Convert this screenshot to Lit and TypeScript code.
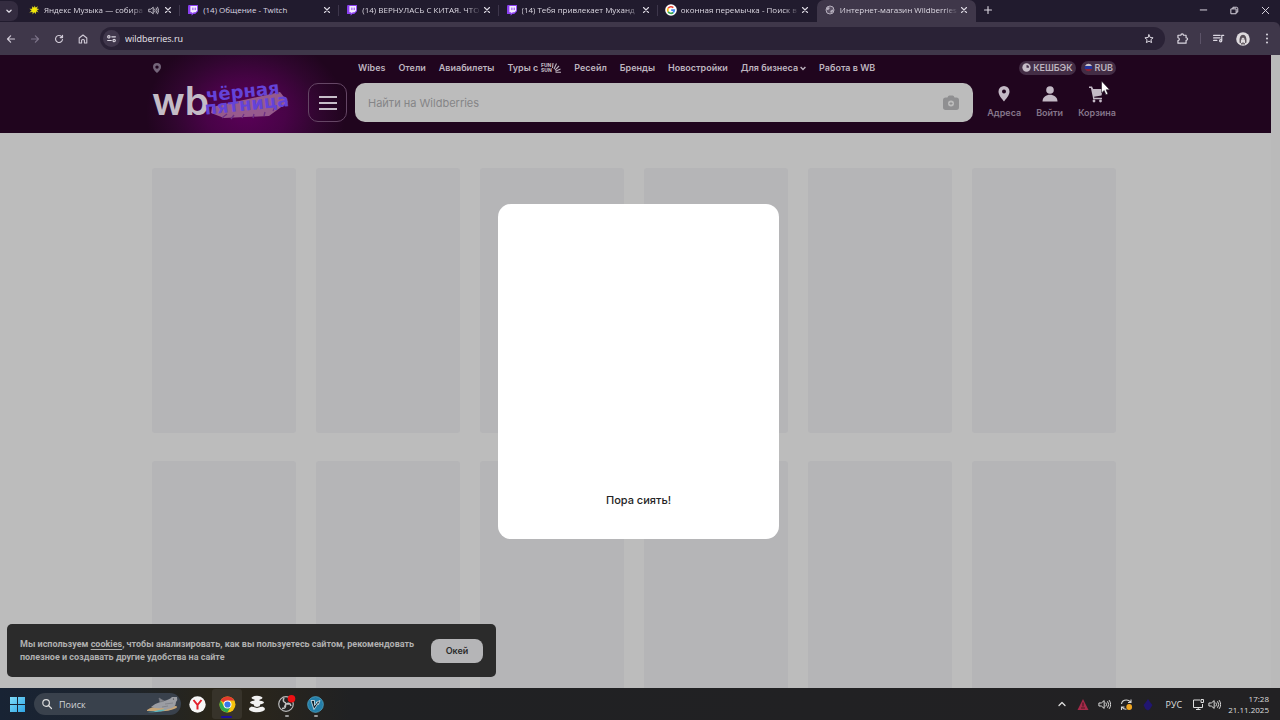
import { LitElement, html, css, svg, nothing, TemplateResult } from "lit";
import { customElement, state } from "lit/decorators.js";

const stroke = (d: string, size = 12, width = 1.2) => html`
  <svg class="icon" width=${size} height=${size} viewBox="0 0 12 12" fill="none" stroke="currentColor"
    stroke-width=${width} stroke-linecap="round" stroke-linejoin="round" aria-hidden="true"><path d=${d}></path></svg>`;

const twitch = html`
  <svg class="icon" width="12" height="12" viewBox="0 0 12 12" aria-hidden="true">
    <path d="M1.5 1H11v6.2L8.2 10H6.4L4.6 11.8V10H1V2.6z" fill="#8b3ff0"></path>
    <path d="M3.4 1.9h6.7v4.9L8.5 8.3H6.8L5.3 9.6V8.3H3.4z" fill="#f4ecff"></path>
    <path d="M5.9 3.6v2.5M8.2 3.6v2.5" stroke="#8b3ff0" stroke-width="1"></path>
  </svg>`;

const yandexMusic = html`
  <svg class="icon" width="12" height="12" viewBox="0 0 12 12" aria-hidden="true">
    <path d="M6.5 1.6l1.1 2 2.5-1.4-1.3 2.3 2.4.6-2.2 1.3 1.6 2.1-2.4-.9L7.9 10 6.2 8.3 4.6 10.6l-.1-2.7-3.2.6 2.2-1.9L1.4 4.8l2.9-.1-.4-2.4 2.2 1.4z" fill="#d9d21d"></path>
    <circle cx="6.2" cy="5.9" r="2.3" fill="#f6e900"></circle>
  </svg>`;

const google = html`
  <svg class="icon" width="12" height="12" viewBox="0 0 12 12" fill="none" stroke-width="1.7" aria-hidden="true">
    <circle cx="6" cy="6" r="5.8" fill="#fff"></circle>
    <path d="M8.3 3.7A3.3 3.3 0 0 0 3.1 4.4" stroke="#ea4335"></path>
    <path d="M3.1 4.4a3.3 3.3 0 0 0 0 3.2" stroke="#fbbc05"></path>
    <path d="M3.1 7.6a3.3 3.3 0 0 0 5.1.9" stroke="#34a853"></path>
    <path d="M8.2 8.5A3.3 3.3 0 0 0 9.3 6.1H6.2" stroke="#4285f4"></path>
  </svg>`;

const globe = html`
  <svg class="icon" width="12" height="12" viewBox="0 0 12 12" aria-hidden="true">
    <circle cx="6" cy="6" r="4" fill="#5b5265" stroke="#b5afbd" stroke-width="1"></circle>
    <path d="M3 3.6c1.6-.8 2.8-.6 2.6.7-.2 1.2-1.3 1-1.4 2L2.4 5.6zM6.2 7c1.6-.4 1.4-1.6 3.2-1.4-.1 1.9-1.2 3-2.6 3.5z" fill="#b5afbd"></path>
  </svg>`;

const speaker = (size = 12) => stroke("M1.2 4.6h1.9l2.6-2.2v7.2L3.1 7.4H1.2zM7.4 4.5q1.1 1.5 0 3M9 3.3q2 2.7 0 5.4M10.5 2.3q2.6 3.7 0 7.4", size, 0.9);

interface Tab { title: string; icon: TemplateResult; audio?: boolean; active?: boolean }

const TABS: Tab[] = [
  { title: "Яндекс Музыка — собира", icon: yandexMusic, audio: true },
  { title: "(14) Общение - Twitch", icon: twitch },
  { title: "(14) ВЕРНУЛАСЬ С КИТАЯ. ЧТО", icon: twitch },
  { title: "(14) Тебя привлекает Муханд", icon: twitch },
  { title: "оконная перемычка - Поиск в", icon: google },
  { title: "Интернет-магазин Wildberries", icon: globe, active: true },
];

@customElement("browser-chrome")
export class BrowserChrome extends LitElement {
  static styles = css`
    :host { display: block; font-family: "Open Sans", "Noto Sans", sans-serif; color: #dcd8e2; background: #211b2e; }
    button { border: 0; padding: 0; background: none; color: inherit; font: inherit; display: grid; place-items: center; flex: none; }
    .icon { display: block; flex: none; }
    .strip { display: flex; align-items: center; height: 22px; }
    .menu { width: 18px; height: 20px; margin-right: 3px; border-radius: 0 7px 7px 0; background: #342c40; }
    .tabs { display: flex; flex: 0 1 955px; min-width: 0; height: 100%; align-items: center; }
    .tab { flex: 1 1 0; min-width: 0; display: flex; align-items: center; height: 22px; padding: 0 6px 2px 7px; box-sizing: border-box; position: relative; font-size: 8px; }
    .tab::after { content: ""; position: absolute; right: 0; top: 5px; height: 11px; border-right: 1px solid #3d364b; }
    .tab.active { background: #3f374a; border-radius: 7px 7px 0 0; }
    .tab.active::after, .tab.quiet::after { display: none; }
    .title { flex: 1; min-width: 0; margin-left: 4px; overflow: hidden; white-space: nowrap; line-height: 12px; }
    .title.long { -webkit-mask-image: linear-gradient(90deg, #000 calc(100% - 14px), transparent); mask-image: linear-gradient(90deg, #000 calc(100% - 14px), transparent); }
    .audio { margin: 0 3px; }
    .new { width: 24px; height: 20px; margin-bottom: 2px; }
    .window { margin: 0 0 2px auto; display: flex; gap: 18px; padding-right: 8px; }
    .bar { display: flex; align-items: center; height: 33px; padding: 0 7px 0 5px; background: #3f374a; border-radius: 0 6px 0 0; }
    .nav { display: flex; gap: 12px; margin-right: 11px; color: #d0cad6; }
    .nav .off { color: #7d7489; }
    .address { flex: 1; display: flex; align-items: center; gap: 5px; height: 23px; padding: 0 10px 0 3px; border-radius: 12px; background: #2a2236; }
    .site { width: 17px; height: 17px; border-radius: 50%; background: #40374c; }
    input { flex: 1; min-width: 0; border: 0; padding: 0; outline: 0; background: none; color: #eae7ee; font: 9px/14px "Open Sans", sans-serif; }
    .tools { display: flex; align-items: center; gap: 11px; margin-left: 11px; }
    .tools .line { width: 1px; height: 11px; background: #5c5368; }
  `;

  render() {
    return html`
      <div class="strip">
        <button class="menu" aria-label="Поиск вкладок">${stroke("M3.5 5L6 7.4 8.5 5", 10, 1.6)}</button>
        <div class="tabs">
          ${TABS.map((t, i) => html`
            <div class="tab ${t.active ? "active" : ""} ${i === 4 ? "quiet" : ""}">
              ${t.icon}<span class="title ${i === 1 ? "" : "long"}">${t.title}</span>
              ${t.audio ? html`<span class="audio">${speaker(11)}</span>` : nothing}
              <button aria-label="Закрыть">${stroke("M3.5 3.5l5 5M8.5 3.5l-5 5", 12, 1.1)}</button>
            </div>`)}
        </div>
        <button class="new" aria-label="Новая вкладка">${stroke("M6 2.5v7M2.5 6h7", 12, 1.1)}</button>
        <div class="window">
          <button aria-label="Свернуть">${stroke("M3 5.5h6", 13, 0.9)}</button>
          <button aria-label="Развернуть">${stroke("M3 4.5h4.500v4.500H3zM4.500 4.300V3h3.300q1.200 0 1.200 1.200v3.300H7.700", 13, 0.9)}</button>
          <button aria-label="Закрыть окно">${stroke("M3 3l6 6M9 3L3 9", 13, 0.9)}</button>
        </div>
      </div>
      <div class="bar">
        <div class="nav">
          <button aria-label="Назад">${stroke("M9.500 6H2.500M5.600 2.800L2.500 6l3.100 3.200")}</button>
          <button class="off" aria-label="Вперёд">${stroke("M2.500 6h7M6.400 2.800L9.500 6 6.400 9.200")}</button>
          <button aria-label="Обновить">${stroke("M9.500 6.500A3.500 3.500 0 1 1 8.600 3.600L9.500 4.500M9.500 2.300v2.300H7.200")}</button>
          <button aria-label="Домой">${stroke("M2.200 5L6 2l3.800 3v5H7.400V7.200q-1.400-1.500-2.800 0V10H2.200z", 12, 1.1)}</button>
        </div>
        <div class="address">
          <button class="site" aria-label="Сведения о сайте">${stroke("M1.800 4.200a1.300 1.300 0 1 0 2.600 0a1.300 1.300 0 1 0-2.600 0M6.300 4.200h4M1.800 8.200h4M7.600 8.200a1.300 1.300 0 1 0 2.600 0a1.300 1.300 0 1 0-2.600 0", 11, 1.2)}</button>
          <input aria-label="Адресная строка" .value=${"wildberries.ru"} />
          <button aria-label="В закладки">${stroke("M6 1.800l1.200 2.700 2.900.3-2.200 1.900.7 2.900L6 8.100 3.400 9.600l.7-2.900-2.200-1.900 2.900-.3z", 12, 1)}</button>
        </div>
        <div class="tools">
          <button aria-label="Расширения">${stroke("M1.800 3h2.700q0-1.300 1.200-1.300T6.900 3H9.300v2.300q1.400.1 1.400 1.200T9.300 7.700V10.300H1.800V8q1.300-.2 1.300-1.300T1.800 5.300z", 13, 1.1)}</button>
          <span class="line"></span>
          <button aria-label="Управление медиа">${stroke("M1.500 3.200h6M1.500 5.500h6M1.500 7.800h3M9 8V3.200h1.800M9 8.100a1 1 0 1 1-2 0a1 1 0 1 1 2 0", 13, 1.1)}</button>
          <button aria-label="Профиль">
            <svg class="icon" width="14" height="14" viewBox="0 0 14 14"><circle cx="7" cy="7" r="6.800" fill="#dedade"></circle>
              <path d="M3.500 10.500Q3 3 7 2.800q4 .2 3.500 7.700l-1.500.8q.6-4.800-2-5.800-2.600 1-2 5.800z" fill="#5a515a"></path>
              <path d="M5.600 7.500h.6M7.800 7.500h.6M5 12q2-2.500 4 0z" stroke="#5a515a" stroke-width=".8" fill="#888"></path></svg>
          </button>
          <button aria-label="Меню">
            <svg class="icon" width="12" height="13" viewBox="0 0 12 13" fill="currentColor"><circle cx="6" cy="2.500" r="1"></circle><circle cx="6" cy="6.500" r="1"></circle><circle cx="6" cy="10.500" r="1"></circle></svg>
          </button>
        </div>
      </div>`;
  }
}

@customElement("shop-header")
export class ShopHeader extends LitElement {
  static styles = css`
    :host { display: block; padding: 5px 155px 11px 152px; font-family: Inter, sans-serif; color: #bdb4bf;
      background: radial-gradient(ellipse 100px 80px at 246px 58px, #5a0058, #480347 40%, #30062f 72%, #22051f00), #20051e; }
    button, a { color: inherit; font: inherit; text-decoration: none; }
    button { border: 0; padding: 0; background: none; }
    svg { display: block; flex: none; }
    .top { display: flex; align-items: center; height: 15px; font-size: 9px; line-height: 15px; font-weight: 600; }
    .place { flex: 0 0 206px; color: #74657a; }
    nav { display: flex; gap: 13px; white-space: nowrap; }
    nav a { display: flex; align-items: center; gap: 2px; }
    .pills { display: flex; gap: 5px; margin-left: auto; }
    .pill { display: flex; align-items: center; gap: 2px; height: 14px; padding: 0 3px; border-radius: 7px; background: #432d45; white-space: nowrap; }
    .main { display: flex; align-items: center; height: 39px; margin-top: 8px; }
    .logo { flex: 0 0 156px; }
    .catalog { display: grid; place-items: center; flex: none; width: 39px; height: 39px; box-sizing: border-box; border: 1px solid #654665; border-radius: 10px; margin-right: 8px; }
    .search { flex: 1; display: flex; align-items: center; height: 39px; padding: 0 13px; box-sizing: border-box; border-radius: 10px; background: #bcbcbc; }
    input { flex: 1; min-width: 0; border: 0; padding: 0; outline: 0; background: none; color: #333; font: 11px/16px Inter, sans-serif; }
    input::placeholder { color: #858587; opacity: 1; }
    .links { display: flex; gap: 15px; margin: 0 0 2px 14px; font-size: 9px; line-height: 12px; color: #85758a; }
    .links a { display: flex; flex-direction: column; align-items: center; gap: 3px; font-weight: 600; }
    .links svg { color: #c3b9c5; }
    .brand { font: 600 39px Inter, sans-serif; }
    .sale { font: 700 18px "DejaVu Sans", sans-serif; }
    .tour { font: 800 5px Inter, sans-serif; }
  `;

  render() {
    const icon = (body: unknown) => html`<svg width="20" height="20" viewBox="0 0 20 20" fill="currentColor" aria-hidden="true">${body}</svg>`;
    return html`
      <div class="top">
        <button class="place" aria-label="Адрес доставки"><svg width="10" height="12" viewBox="0 0 10 12" fill="currentColor"><path fill-rule="evenodd" d="M5 1a4 4 0 0 1 4 4c0 2.600-2.200 4.300-4 6C3.200 9.300 1 7.600 1 5a4 4 0 0 1 4-4zm0 2.400a1.700 1.700 0 1 0 0 3.400 1.700 1.700 0 0 0 0-3.400z"></path></svg></button>
        <nav>
          <a href="#wibes">Wibes</a><a href="#hotels">Отели</a><a href="#avia">Авиабилеты</a>
          <a href="#tours">Туры с
            <svg width="21" height="11" viewBox="0 0 21 11" aria-label="FUN&amp;SUN" fill="currentColor">
              <text class="tour" x="1" y="5">FUN</text><text class="tour" x="1" y="10">SUN</text>
              <path d="M12.500 6l.5-5M14 7l2.500-5.500M15 8.200l4-4.200M15.500 9.200l5-2.200M15.500 10.200h5.500" stroke="currentColor" stroke-width="1.100"></path>
            </svg></a>
          <a href="#resale">Ресейл</a><a href="#brands">Бренды</a><a href="#homes">Новостройки</a>
          <a href="#business">Для бизнеса <svg width="6" height="6" viewBox="0 0 6 6" fill="none" stroke="currentColor" stroke-width="1.400"><path d="M.6 2L3 4.400 5.400 2"></path></svg></a>
          <a href="#jobs">Работа в WB</a>
        </nav>
        <div class="pills">
          <button class="pill"><svg width="9" height="9" viewBox="0 0 8 8"><circle cx="4" cy="4" r="3.700" fill="#c6bdc8"></circle><path d="M4 1.800v2.400h2.200A2.200 2.200 0 0 0 4 1.800z" fill="#45304a"></path></svg>КЕШБЭК</button>
          <button class="pill"><svg width="9" height="9" viewBox="0 0 9 9"><path d="M1 3a3.900 3.900 0 0 1 7 0z" fill="#c9c4cc"></path><path d="M1 3h7q.7 1.500 0 3H1q-.7-1.500 0-3z" fill="#24349a"></path><path d="M1 6h7a3.900 3.900 0 0 1-7 0z" fill="#8c1f33"></path></svg>RUB</button>
        </div>
      </div>
      <div class="main">
        <a class="logo" href="#home" aria-label="Wildberries">
          <svg width="140" height="39" viewBox="0 0 140 39" overflow="visible">
            <text class="brand" x="0" y="32" fill="#c4bcc6">wb</text>
            <path d="M60 24L128 9l8 10-19 14-45 2-13-5z" fill="#a8709c" opacity="0.800"></path>
            <path d="M70 35l5-4M79 36l3-4M90 35l2-4M101 35l1-4M112 33l1-4M121 28l2-4" stroke="#6d2f86" stroke-width="1.300"></path>
            <g transform="rotate(-6 60 20)" fill="#6443d8">
              <text class="sale" x="55" y="18">чёрная</text>
              <text class="sale" x="52" y="31">пятница</text>
            </g>
          </svg>
        </a>
        <button class="catalog" aria-label="Каталог"><svg width="18" height="16" viewBox="0 0 18 16" stroke="#c6bdc8" stroke-width="2"><path d="M0 2h18M0 8h18M0 14h18"></path></svg></button>
        <label class="search">
          <input type="search" aria-label="Поиск" placeholder="Найти на Wildberries" />
          <svg width="18" height="18" viewBox="0 0 18 18"><path d="M5.500 3.500Q6 1.500 7.500 1.500h3q1.500 0 2 2h1.800q2.700 0 2.700 2.700v7.100q0 2.700-2.700 2.700H3.700Q1 16 1 13.300V6.200q0-2.700 2.700-2.700z" fill="#8f8f91"></path><circle cx="9" cy="9.500" r="3" fill="#bcbcbc"></circle><path d="M9 8v3M7.500 9.500h3" stroke="#8f8f91"></path></svg>
        </label>
        <div class="links">
          <a href="#addresses">${icon(svg`<path fill-rule="evenodd" d="M10 2A5.500 5.500 0 0 1 15.500 7.500c0 4-3.500 7.300-5.500 10C8 14.800 4.500 11.500 4.500 7.500A5.500 5.500 0 0 1 10 2zm0 3.500a2 2 0 1 0 0 4 2 2 0 0 0 0-4z"></path>`)}Адреса</a>
          <a href="#login">${icon(svg`<circle cx="10" cy="6" r="3.800"></circle><path d="M2.500 17.500c0-9 15-9 15 0z"></path>`)}Войти</a>
          <a href="#cart">${icon(svg`<path d="M2 2.500h3l1.200 2.500H16l-1.500 6.500-7.500 1.300.4 1H15v1.500H6.200L5.600 12 3.900 4H2z"></path><circle cx="7" cy="17" r="1.400"></circle><circle cx="13.500" cy="17" r="1.400"></circle>`)}Корзина</a>
        </div>
      </div>`;
  }
}

@customElement("cookie-notice")
export class CookieNotice extends LitElement {
  static styles = css`
    :host { display: flex; align-items: center; justify-content: space-between; box-sizing: border-box; width: 489px; height: 53px; padding: 0 13px; border-radius: 5px; background: #2b2b2b; color: #b0b0b0; font: 700 9px/13px Roboto, Inter, sans-serif; }
    p { margin: 0; white-space: nowrap; }
    a { color: inherit; text-underline-offset: 2px; }
    button { width: 52px; height: 24px; border: 0; padding: 0; border-radius: 8px; background: #b5b5b7; color: #2b2b2b; font: 600 9px/13px Inter, sans-serif; }
  `;

  render() {
    return html`
      <p>Мы используем <a href="#cookies">cookies</a>, чтобы анализировать, как вы пользуетесь сайтом, рекомендовать<br />полезное и создавать другие удобства на сайте</p>
      <button @click=${() => this.dispatchEvent(new Event("accept"))}>Окей</button>`;
  }
}

@customElement("task-bar")
export class TaskBar extends LitElement {
  static styles = css`
    :host { display: flex; align-items: center; height: 32px; padding: 0 11px 0 9px; font: 9px/11px "Open Sans", "Noto Sans", sans-serif; color: #dedede;
      background: linear-gradient(90deg, #182334 0, #1d242d 120px, #29251a 210px, #29251c 260px, #202123 350px, #222123); }
    button { border: 0; padding: 0; background: none; color: inherit; font: inherit; display: grid; place-items: center; }
    svg { display: block; flex: none; }
    .search { display: flex; align-items: center; gap: 6px; width: 147px; height: 22px; margin: 0 1px 0 8px; padding: 0 1px 0 7px; box-sizing: border-box; border-radius: 11px; background: #39414c; }
    input { flex: 1; min-width: 0; border: 0; padding: 0; outline: 0; background: none; font: inherit; }
    input::placeholder { color: #d2d4d8; opacity: 1; }
    .apps { display: flex; }
    .app { position: relative; width: 30px; height: 30px; }
    .app.open { width: 29px; }
    .app.open::after { content: ""; position: absolute; left: 13px; bottom: 2px; width: 4px; height: 2px; border-radius: 1px; background: #9a9a9a; }
    .app.active { background: #37332a; border-radius: 3px; }
    .app.active::after { content: ""; position: absolute; left: 9px; bottom: 1px; width: 11px; height: 2px; border-radius: 1px; background: #1c0e9c; }
    .tray { display: flex; align-items: center; gap: 9px; margin-left: auto; }
    .lang { margin: 0 1px 0 3px; }
    .net { display: flex; gap: 3px; }
    .tail { display: flex; align-items: center; gap: 7px; }
    .clock { text-align: right; font-size: 8px; }
  `;

  render() {
    return html`
      <button aria-label="Пуск"><svg width="17" height="17" viewBox="0 0 17 17"><defs><linearGradient id="w" x2="1" y2="1"><stop stop-color="#7fdcf8"></stop><stop offset="1" stop-color="#2fa6e6"></stop></linearGradient></defs><path d="M1 1h7v7H1zM9 1h7v7H9zM1 9h7v7H1zM9 9h7v7H9z" fill="url(#w)"></path></svg></button>
      <label class="search">
        ${stroke("M1.800 5a3.300 3.300 0 1 0 6.600 0a3.300 3.300 0 1 0-6.600 0M7.500 7.500L10.500 10.500", 12, 1.2)}
        <input type="search" aria-label="Поиск в системе" placeholder="Поиск" />
        <svg width="34" height="18" viewBox="0 0 34 18">
          <path d="M1 15q6-4 14-3l15-1q3 1-2 3-8 3-15 2H1z" fill="#c7a576"></path><path d="M1 17q7 0 12-2l8-1q-6 4-20 3z" fill="#5fb5bd"></path>
          <path d="M5 12q5-4 12-6 6-1 9-4l3 0 2 0q1 3-1 5 0 6-8 7l-3 1-2-2q-6 1-12-1z" fill="#9b9da3"></path><path d="M14 7l-1-4 5 3zM19 9l8-1M16 12l6-1" fill="#85878e" stroke="#777980" stroke-width=".7"></path><circle cx="27.500" cy="4" r=".6" fill="#333"></circle>
        </svg>
      </label>
      <div class="apps">
        <button class="app" aria-label="Яндекс"><svg width="17" height="17" viewBox="0 0 17 17"><circle cx="8.500" cy="8.500" r="8.200" fill="#f7f7f7"></circle><path d="M4.500 4l4 5v4.500M12.500 4l-4 5" stroke="#e3202b" stroke-width="2" fill="none"></path></svg></button>
        <button class="app active" aria-label="Chrome"><svg width="17" height="17" viewBox="0 0 17 17"><circle cx="8.500" cy="8.500" r="8" fill="#f4c20d"></circle><path d="M8.500 8.500L1.600 4.500A8 8 0 0 1 15.400 4.500H8.500z" fill="#e33b2e"></path><path d="M1.600 4.500A8 8 0 0 0 8.300 16.500L12 10.500H5z" fill="#2da94f"></path><circle cx="8.500" cy="8.500" r="4" fill="#fff"></circle><circle cx="8.500" cy="8.500" r="3.100" fill="#3978e8"></circle></svg></button>
        <button class="app" aria-label="Лаунчер"><svg width="18" height="18" viewBox="0 0 18 18" fill="#f1f1f1"><ellipse cx="9" cy="2.800" rx="5.500" ry="2"></ellipse><path d="M6.500 4h5v2h-5z"></path><ellipse cx="9" cy="7.500" rx="7" ry="2"></ellipse><path d="M5.500 8h7l-1 4h-5z"></path><ellipse cx="9" cy="14" rx="8" ry="3.300"></ellipse><path d="M4 11q5 3 10 0" stroke="#29251c" stroke-width="1" fill="none"></path></svg></button>
        <button class="app open" aria-label="OBS"><svg width="19" height="18" viewBox="0 0 19 18"><circle cx="9" cy="9" r="7.300" fill="#242424" stroke="#b9b9b9" stroke-width="1.200"></circle><path d="M9 8q-4-1-2-5M9 9q4-2 5 2M8.500 9.500q1 4-3.500 4M9 8.500L7.500 12M9.500 9H12" stroke="#c2c2c2" stroke-width="1.500" fill="none"></path><circle cx="14.500" cy="3.800" r="3.800" fill="#ee1013"></circle></svg></button>
        <button class="app open" aria-label="Vegas"><svg width="17" height="17" viewBox="0 0 17 17"><circle cx="8.500" cy="8.500" r="7.900" fill="#247ea8" stroke="#58a8c4" stroke-width=".7"></circle><path d="M4 4.500h3.500v5l2.500-3H9l4-2-1.500 4-.5-1-4 6z" fill="#101e2b" stroke="#e1edf2" stroke-width=".8"></path></svg></button>
      </div>
      <div class="tray">
        <button aria-label="Скрытые значки">${stroke("M3 7.500l3-3 3 3", 12, 1.3)}</button>
        <svg width="12" height="13" viewBox="0 0 12 13"><path d="M6 1l5.500 11H.5z" fill="#a52a49"></path><path d="M6 4.500v4M4 10h4" stroke="#4a1623" stroke-width="1.200"></path></svg>
        ${speaker(13)}
        <svg width="13" height="13" viewBox="0 0 13 13" fill="none" stroke="#d5d5d5" stroke-width="1.100"><path d="M1.500 6Q2 2 6.500 2q2.500 0 4 2M11 1.500V4.500H8M1.500 12V9h3M2 9q1.500 2.500 4.500 2.300"></path><circle cx="9.200" cy="9" r="2.900" fill="#f0a51f" stroke="none"></circle></svg>
        <svg width="12" height="13" viewBox="0 0 12 13"><path d="M6 1l2 3 2.500 3L8 11l-2 1.500L3.500 11 1.500 7 4 4z" fill="#211670"></path></svg>
        <button class="lang">РУС</button>
        <div class="tail">
          <button class="net" aria-label="Сеть и звук">
            <svg width="13" height="13" viewBox="0 0 13 13" fill="none" stroke="#dedede" stroke-width="1"><path d="M8 2H1.500v7.500h9V6M4 11.500h4.500M6.200 9.500v2M9 1.500h2.500v3H9z"></path></svg>
            ${speaker(13)}
          </button>
          <div class="clock">17:28<br />21.11.2025</div>
        </div>
      </div>`;
  }
}

@customElement("app-root")
export class AppRoot extends LitElement {
  @state() private cookies = true;

  static styles = css`
    :host { display: flex; flex-direction: column; height: 100vh; position: relative; overflow: hidden; }
    browser-chrome, task-bar, shop-header { flex: none; }
    .view { flex: 1; min-height: 0; display: flex; position: relative; background: #bcbcbc; }
    .page { flex: 1; min-width: 0; display: flex; flex-direction: column; overflow: hidden; }
    .track { flex: none; width: 9px; background: #bababa; }
    .grid { display: grid; grid-template-columns: repeat(6, 1fr); grid-auto-rows: 265px; gap: 28px 20px; padding: 35px 155px 0 152px; }
    .card { border-radius: 3px; background: #b5b5b7; }
    .overlay { position: absolute; inset: 0; display: grid; place-items: center; padding-right: 3px; }
    .dialog { display: flex; flex-direction: column; justify-content: flex-end; align-items: center; box-sizing: border-box; width: 281px; height: 335px; padding-bottom: 31px; border-radius: 13px; background: #fff; color: #242424; font: 500 11px/16px Inter, sans-serif; }
    .dialog p { margin: 0; }
    cookie-notice { position: absolute; left: 7px; bottom: 11px; }
    .cursor { position: absolute; left: 1100px; top: 80px; }
  `;

  render() {
    return html`
      <browser-chrome></browser-chrome>
      <main class="view">
        <div class="page">
          <shop-header></shop-header>
          <div class="grid">${Array.from({ length: 12 }, () => html`<div class="card"></div>`)}</div>
        </div>
        <div class="track"></div>
        <div class="overlay"><div class="dialog" role="dialog" aria-label="Пора сиять!"><p>Пора сиять!</p></div></div>
        ${this.cookies ? html`<cookie-notice @accept=${() => (this.cookies = false)}></cookie-notice>` : nothing}
      </main>
      <task-bar></task-bar>
      <svg class="cursor" width="12" height="17" viewBox="0 0 12 17" aria-hidden="true"><path d="M1.500 1v12l2.700-2.500 1.700 4.200 2-.8-1.800-4.100h3.600z" fill="#fff" stroke="#1d1020" stroke-width=".6"></path></svg>`;
  }
}
